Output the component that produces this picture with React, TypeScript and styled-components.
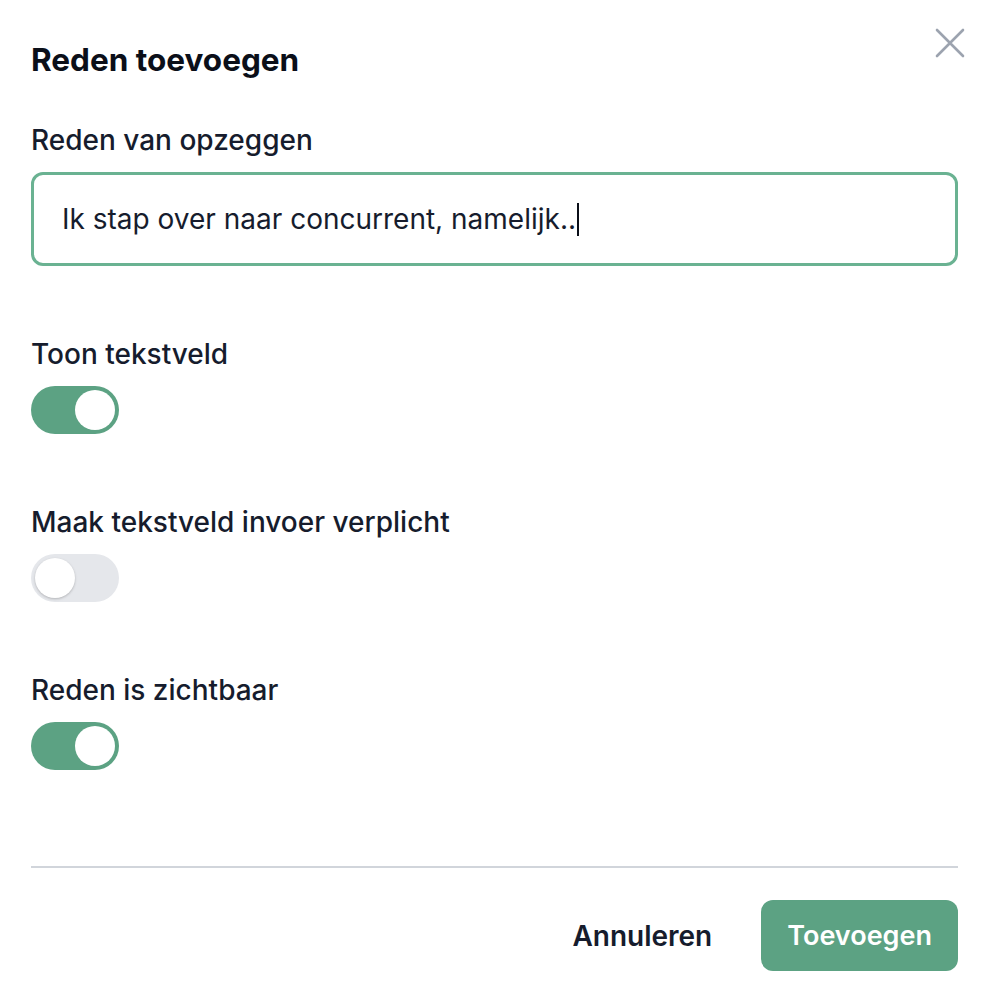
import React, { useState } from "react";
import styled, { createGlobalStyle } from "styled-components";

const GlobalStyle = createGlobalStyle`
  html, body {
    margin: 0;
    padding: 0;
    background: #ffffff;
  }
  body {
    font-family: Inter, "Noto Sans", "Liberation Sans", sans-serif;
    -webkit-font-smoothing: antialiased;
  }
`;

type ToggleProps = {
  on: boolean;
  onChange: (value: boolean) => void;
};

const Toggle = ({ on, onChange }: ToggleProps) => (
  <Track type="button" $on={on} onClick={() => onChange(!on)}>
    <Knob $on={on} />
  </Track>
);

export default function App() {
  const [showField, setShowField] = useState(true);
  const [required, setRequired] = useState(false);
  const [visible, setVisible] = useState(true);

  return (
    <>
      <GlobalStyle />
      <Dialog>
        <CloseButton type="button" aria-label="Sluiten">
          <svg width="30" height="30" viewBox="0 0 30 30" fill="none">
            <path
              d="M2 2L28 28M28 2L2 28"
              stroke="#9ca3af"
              strokeWidth="2.6"
              strokeLinecap="round"
            />
          </svg>
        </CloseButton>
        <Title>Reden toevoegen</Title>

        <Fields>
          <Field>
            <Label>Reden van opzeggen</Label>
            <InputBox>
              <InputText>Ik stap over naar concurrent, namelijk..</InputText>
              <Caret />
            </InputBox>
          </Field>

          <Field>
            <Label>Toon tekstveld</Label>
            <Toggle on={showField} onChange={setShowField} />
          </Field>

          <Field>
            <Label>Maak tekstveld invoer verplicht</Label>
            <Toggle on={required} onChange={setRequired} />
          </Field>

          <Field>
            <Label>Reden is zichtbaar</Label>
            <Toggle on={visible} onChange={setVisible} />
          </Field>
        </Fields>

        <Divider />

        <Footer>
          <CancelButton type="button">Annuleren</CancelButton>
          <PrimaryButton type="button">Toevoegen</PrimaryButton>
        </Footer>
      </Dialog>
    </>
  );
}

const Dialog = styled.div`
  position: relative;
  width: 994px;
  height: 990px;
  box-sizing: border-box;
  padding: 42px 36px 18px 31px;
  display: flex;
  flex-direction: column;
`;

const CloseButton = styled.button`
  position: absolute;
  top: 28px;
  right: 29px;
  width: 30px;
  height: 30px;
  padding: 0;
  border: none;
  background: none;
  cursor: pointer;
  display: flex;
`;

const Title = styled.h2`
  margin: 0 0 46px;
  font-size: 31.5px;
  line-height: 36px;
  font-weight: 700;
  color: #0b0f19;
`;

const Fields = styled.div`
  display: flex;
  flex-direction: column;
  gap: 72px;
`;

const Field = styled.div`
  display: flex;
  flex-direction: column;
  align-items: flex-start;
  gap: 16px;
`;

const Label = styled.label`
  font-size: 28px;
  line-height: 32px;
  font-weight: 500;
  color: #161c2d;
`;

const InputBox = styled.div`
  align-self: stretch;
  height: 94px;
  box-sizing: border-box;
  border: 3px solid #6ab292;
  border-radius: 12px;
  padding: 0 28px;
  display: flex;
  align-items: center;
`;

const InputText = styled.span`
  font-size: 28px;
  line-height: 34px;
  font-weight: 400;
  color: #161c2d;
`;

const Caret = styled.span`
  display: inline-block;
  width: 2px;
  height: 33px;
  margin-left: 1px;
  background: #0b0f19;
`;

const Track = styled.button<{ $on: boolean }>`
  position: relative;
  width: 88px;
  height: 48px;
  padding: 4px;
  border: none;
  border-radius: 24px;
  background: ${(p) => (p.$on ? "#5ca283" : "#e5e7eb")};
  cursor: pointer;
  display: flex;
  justify-content: ${(p) => (p.$on ? "flex-end" : "flex-start")};
  align-items: center;
  box-sizing: border-box;
`;

const Knob = styled.span<{ $on: boolean }>`
  width: 40px;
  height: 40px;
  border-radius: 50%;
  background: #ffffff;
  box-shadow: ${(p) =>
    p.$on ? "none" : "0 1px 3px rgba(0, 0, 0, 0.15), 0 1px 2px rgba(0, 0, 0, 0.08)"};
`;

const Divider = styled.hr`
  margin: 96px 0 0;
  border: none;
  height: 2px;
  background: #d1d5db;
`;

const Footer = styled.div`
  margin-top: 32px;
  display: flex;
  justify-content: flex-end;
  align-items: center;
  gap: 49px;
`;

const CancelButton = styled.button`
  border: none;
  background: none;
  padding: 0;
  font-family: inherit;
  font-size: 28px;
  font-weight: 600;
  color: #161c2d;
  cursor: pointer;
`;

const PrimaryButton = styled.button`
  height: 71px;
  padding: 0 26px;
  border: none;
  border-radius: 12px;
  background: #5ca283;
  font-family: inherit;
  font-size: 27px;
  font-weight: 600;
  color: #ffffff;
  cursor: pointer;
`;
